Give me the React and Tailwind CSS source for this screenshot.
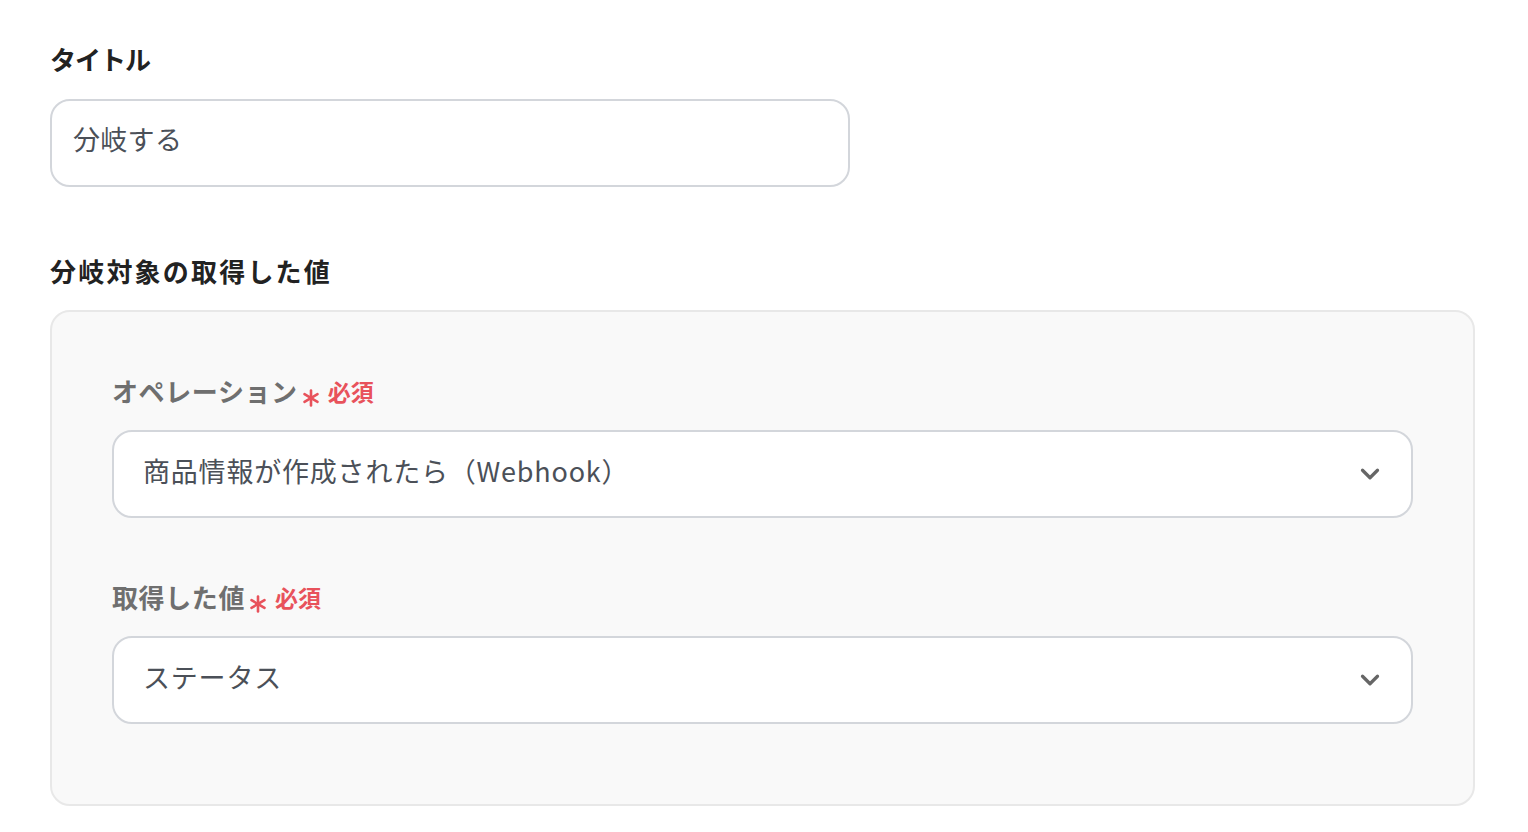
import { ChevronDown } from 'lucide-react'

const font = "font-['Noto_Sans_CJK_JP','Noto_Sans',sans-serif]"

function Asterisk() {
  return (
    <svg width="18" height="18" viewBox="0 0 18 18" className="mt-[10px]">
      <g stroke="#e8525b" strokeWidth="2.6" strokeLinecap="round">
        <line x1="9" y1="1.5" x2="9" y2="16.5" />
        <line x1="2.5" y1="5.2" x2="15.5" y2="12.8" />
        <line x1="2.5" y1="12.8" x2="15.5" y2="5.2" />
      </g>
    </svg>
  )
}

function Label({ children, required, className = '' }) {
  return (
    <div className={`flex items-center h-10 ${className}`}>
      <span className="text-[26px] font-bold text-[#6f6f6f] tracking-[0.6px] mb-[6px]">{children}</span>
      {required && (
        <span className="flex items-center ml-[4px] text-[#e8525b] font-bold">
          <Asterisk />
          <span className="text-[23px] ml-[8px] mb-[4px]">必須</span>
        </span>
      )}
    </div>
  )
}

function Select({ value }) {
  return (
    <div className="flex items-center justify-between h-[88px] rounded-[20px] border-2 border-[#d3d6db] bg-white pl-[29px] pr-[26px]">
      <span className="text-[27px] text-[#4b5058] tracking-[0.8px] mb-[6px]">{value}</span>
      <ChevronDown size={30} strokeWidth={2.6} className="text-[#666]" />
    </div>
  )
}

export default function App() {
  return (
    <div className={`min-h-screen bg-white pl-[50px] pt-[41px] ${font}`}>
      <div className="flex items-center h-10 mb-[18px]">
        <span className="text-[26px] font-bold text-[#222] tracking-[-1px] mb-[6px]">タイトル</span>
      </div>
      <div className="flex items-center w-[800px] h-[88px] rounded-[20px] border-2 border-[#d3d6db] bg-white px-[21px]">
        <span className="text-[27px] text-[#4b5058] tracking-[0.3px] mb-[8px]">分岐する</span>
      </div>

      <div className="flex items-center h-10 mt-[65px] mb-[18px]">
        <span className="text-[26px] font-bold text-[#222] tracking-[2.2px] mb-[4px]">分岐対象の取得した値</span>
      </div>
      <div className="w-[1425px] rounded-[20px] border-2 border-[#e8e8e8] bg-[#f9f9f9] px-[60px] pt-[61px] pb-[80px]">
        <Label required className="mb-[17px]">オペレーション</Label>
        <Select value="商品情報が作成されたら（Webhook）" />
        <Label required className="mt-[61px] mb-[17px]">取得した値</Label>
        <Select value="ステータス" />
      </div>
    </div>
  )
}
